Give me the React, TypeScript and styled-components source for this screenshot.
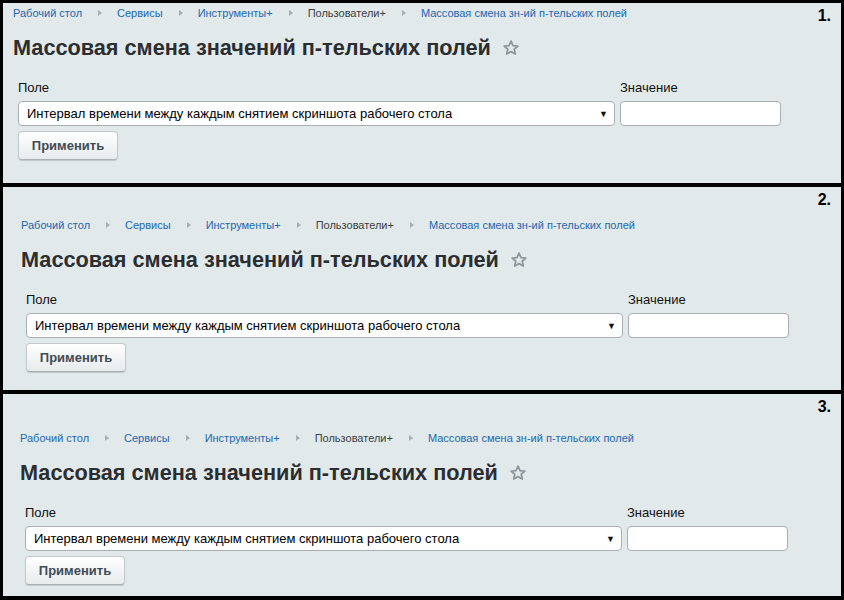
import styled, { createGlobalStyle } from "styled-components"

const GlobalStyle = createGlobalStyle`
  html, body {
    margin: 0;
    padding: 0;
    background: #000;
  }
  body {
    font-family: "Liberation Sans", Arial, sans-serif;
  }
`

type PanelProps = {
  num: string
  top: number
  left: number
  bottom: number
}

const crumbs = [
  { text: "Рабочий стол", link: true },
  { text: "Сервисы", link: true },
  { text: "Инструменты+", link: true },
  { text: "Пользователи+", link: false },
  { text: "Массовая смена зн-ий п-тельских полей", link: true },
]

const Star = () => (
  <svg width="18" height="18" viewBox="0 0 24 24" fill="none" stroke="#8e979c" strokeWidth="2.4" strokeLinejoin="round">
    <path d="M12 2.8l2.7 5.9 6.4.7-4.8 4.3 1.4 6.3L12 16.8 6.3 20l1.4-6.3-4.8-4.3 6.4-.7z" />
  </svg>
)

const Panel = ({ num, top, left, bottom }: PanelProps) => (
  <PanelBox $top={top} $left={left} $bottom={bottom}>
    <Num>{num}</Num>
    <Breadcrumbs>
      {crumbs.map((c, i) => (
        <Crumb key={c.text} $link={c.link}>
          {c.text}
          {i < crumbs.length - 1 && <Arrow />}
        </Crumb>
      ))}
    </Breadcrumbs>
    <Title>
      Массовая смена значений п-тельских полей
      <Star />
    </Title>
    <Form>
      <Row>
        <Field>
          <Label>Поле</Label>
          <SelectBox>
            <span>Интервал времени между каждым снятием скриншота рабочего стола</span>
            <Caret>▼</Caret>
          </SelectBox>
        </Field>
        <Field>
          <Label>Значение</Label>
          <TextInput type="text" />
        </Field>
      </Row>
      <Button>Применить</Button>
    </Form>
  </PanelBox>
)

const App = (): JSX.Element => {
  return (
    <>
      <GlobalStyle />
      <Page>
        <Panel num="1." top={2} left={10} bottom={23} />
        <Panel num="2." top={30} left={18} bottom={18} />
        <Panel num="3." top={36} left={17} bottom={11} />
      </Page>
    </>
  )
}

export default App

const Page = styled.div`
  width: 844px;
  height: 600px;
  box-sizing: border-box;
  background: #000;
  padding: 3px;
  display: flex;
  flex-direction: column;
  gap: 4px;
`

const PanelBox = styled.div<{ $top: number; $left: number; $bottom: number }>`
  position: relative;
  background: #e2e9eb;
  padding: ${(p) => p.$top}px 10px ${(p) => p.$bottom}px ${(p) => p.$left}px;
`

const Num = styled.div`
  position: absolute;
  top: 4px;
  right: 10px;
  font-size: 16px;
  font-weight: bold;
  color: #000;
  line-height: 18px;
`

const Breadcrumbs = styled.div`
  display: flex;
  align-items: center;
  height: 16px;
  font-size: 11px;
`

const Crumb = styled.span<{ $link: boolean }>`
  display: flex;
  align-items: center;
  color: ${(p) => (p.$link ? "#2067b0" : "#3a3f42")};
  white-space: nowrap;
`

const Arrow = styled.i`
  display: inline-block;
  width: 0;
  height: 0;
  border-left: 4px solid #a6aeb3;
  border-top: 3.5px solid transparent;
  border-bottom: 3.5px solid transparent;
  margin: 0 15px 0 16px;
`

const Title = styled.h1`
  margin: 12px 0 0 0;
  height: 30px;
  display: flex;
  align-items: center;
  gap: 11px;
  font-size: 21.7px;
  font-weight: bold;
  color: #2b2e30;
  line-height: 30px;
`

const Form = styled.div`
  margin-top: 17px;
  padding-left: 5px;
  display: flex;
  flex-direction: column;
  gap: 5px;
`

const Row = styled.div`
  display: flex;
  gap: 5px;
`

const Field = styled.div`
  display: flex;
  flex-direction: column;
  gap: 5px;
`

const Label = styled.label`
  font-size: 13px;
  line-height: 16px;
  color: #111;
`

const SelectBox = styled.div`
  width: 597px;
  height: 25px;
  box-sizing: border-box;
  background: #fff;
  border: 1px solid #a8afb3;
  border-radius: 4px;
  display: flex;
  align-items: center;
  justify-content: space-between;
  padding: 0 6px 0 8px;
  font-size: 13px;
  color: #000;
`

const Caret = styled.span`
  font-size: 9px;
  color: #111;
`

const TextInput = styled.input`
  width: 161px;
  height: 25px;
  box-sizing: border-box;
  background: #fff;
  border: 1px solid #a8afb3;
  border-radius: 4px;
  margin: 0;
  outline: none;
`

const Button = styled.button`
  width: 100px;
  height: 29px;
  box-sizing: border-box;
  border: 1px solid #c3cacd;
  border-bottom-color: #a9b0b4;
  border-radius: 4px;
  background: linear-gradient(#ffffff, #e6ebec);
  box-shadow: 0 1px 1px rgba(0, 0, 0, 0.15);
  font-family: "Liberation Sans", Arial, sans-serif;
  font-size: 13px;
  font-weight: bold;
  color: #3f4b54;
  padding: 0;
  cursor: pointer;
`
